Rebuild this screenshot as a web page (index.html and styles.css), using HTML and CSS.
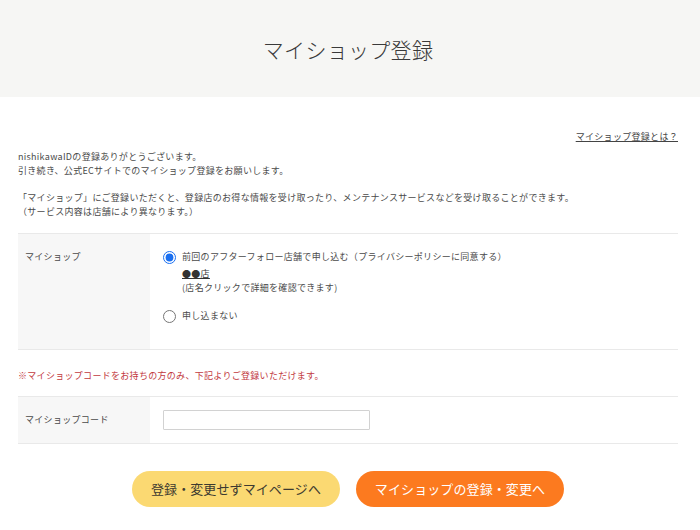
FILE: index.html
```html
<!DOCTYPE html>
<html lang="ja">
<head>
<meta charset="utf-8">
<title>マイショップ登録</title>
<link rel="stylesheet" href="styles.css">
</head>
<body>
<header class="page-head">
  <h1 class="page-title">マイショップ登録</h1>
</header>

<main class="content">
  <div class="help-row"><a class="help-link" href="#">マイショップ登録とは？</a></div>

  <p class="intro">nishikawaIDの登録ありがとうございます。<br>引き続き、公式ECサイトでのマイショップ登録をお願いします。</p>
  <p class="intro">「マイショップ」にご登録いただくと、登録店のお得な情報を受け取ったり、メンテナンスサービスなどを受け取ることができます。<br>（サービス内容は店舗により異なります。）</p>

  <div class="form-table shop-table">
    <div class="form-label">マイショップ</div>
    <div class="form-field">
      <label class="choice">
        <input class="radio" type="radio" name="myshop" checked>
        <span>前回のアフターフォロー店舗で申し込む（プライバシーポリシーに同意する）</span>
      </label>
      <div class="shop-info">
        <a class="shop-name" href="#">●●店</a>
        <div>(店名クリックで詳細を確認できます)</div>
      </div>
      <label class="choice choice-no">
        <input class="radio" type="radio" name="myshop">
        <span>申し込まない</span>
      </label>
    </div>
  </div>

  <p class="note">※マイショップコードをお持ちの方のみ、下記よりご登録いただけます。</p>

  <div class="form-table code-table">
    <div class="form-label">マイショップコード</div>
    <div class="form-field">
      <input class="code-input" type="text">
    </div>
  </div>

  <div class="actions">
    <button class="btn btn-skip" type="button">登録・変更せずマイページへ</button>
    <button class="btn btn-submit" type="button">マイショップの登録・変更へ</button>
  </div>
</main>
</body>
</html>
```

FILE: styles.css
```css
* {
  box-sizing: border-box;
}

body {
  margin: 0;
  font-family: "Noto Sans CJK JP", "Noto Sans", sans-serif;
  font-size: 9px;
  letter-spacing: 0.3px;
  line-height: 14px;
  color: #4a4a4a;
  background: #fff;
}

.page-head {
  height: 97px;
  background: #f6f6f4;
  display: flex;
  align-items: center;
  justify-content: center;
  padding-right: 4px;
}

.page-title {
  margin: 0;
  font-size: 21px;
  font-weight: 300;
  line-height: 30px;
  letter-spacing: 0.3px;
  color: #3a3a3a;
}

.content {
  padding: 0 22px 0 18px;
}

.help-row {
  margin-top: 33px;
  text-align: right;
}

.help-link {
  color: #444;
  text-decoration: underline;
}

.intro {
  margin: 6px 0 0;
}

.intro + .intro {
  margin-top: 13px;
}

.form-table {
  display: grid;
  grid-template-columns: 132px 1fr;
  border-top: 1px solid #e9e9e9;
  border-bottom: 1px solid #e9e9e9;
}

.shop-table {
  margin-top: 14px;
}

.form-label {
  background: #f7f7f7;
  padding: 16px 7px;
  color: #4a4a4a;
}

.form-field {
  padding: 16px 13px 26px;
}

.choice {
  display: flex;
  align-items: center;
  gap: 6px;
}

.radio {
  width: 13px;
  height: 13px;
  margin: 0;
  accent-color: #1a6ff0;
}

.shop-info {
  margin-top: 3px;
  padding-left: 19px;
}

.shop-name {
  color: #333;
  text-decoration: underline;
}

.choice-no {
  margin-top: 14px;
}

.note {
  margin: 19px 0 0;
  color: #c2393e;
}

.code-table {
  margin-top: 13px;
}

.code-table .form-label {
  padding-top: 16px;
  padding-bottom: 0;
}

.code-table .form-field {
  padding: 13px 13px 13px;
}

.code-input {
  display: block;
  width: 207px;
  height: 20px;
  margin: 0;
  border: 1px solid #d2d2d2;
  border-radius: 1px;
  background: #fff;
}

.actions {
  display: flex;
  justify-content: center;
  gap: 16px;
  margin-top: 27px;
}

.btn {
  width: 208px;
  height: 36px;
  border: none;
  border-radius: 18px;
  font-family: inherit;
  font-size: 13px;
  letter-spacing: 0.1px;
  line-height: 20px;
  padding: 0;
  cursor: pointer;
}

.btn-skip {
  background: #fbd972;
  color: #3d3a30;
}

.btn-submit {
  background: #fc7a1f;
  color: #fff;
}
```
